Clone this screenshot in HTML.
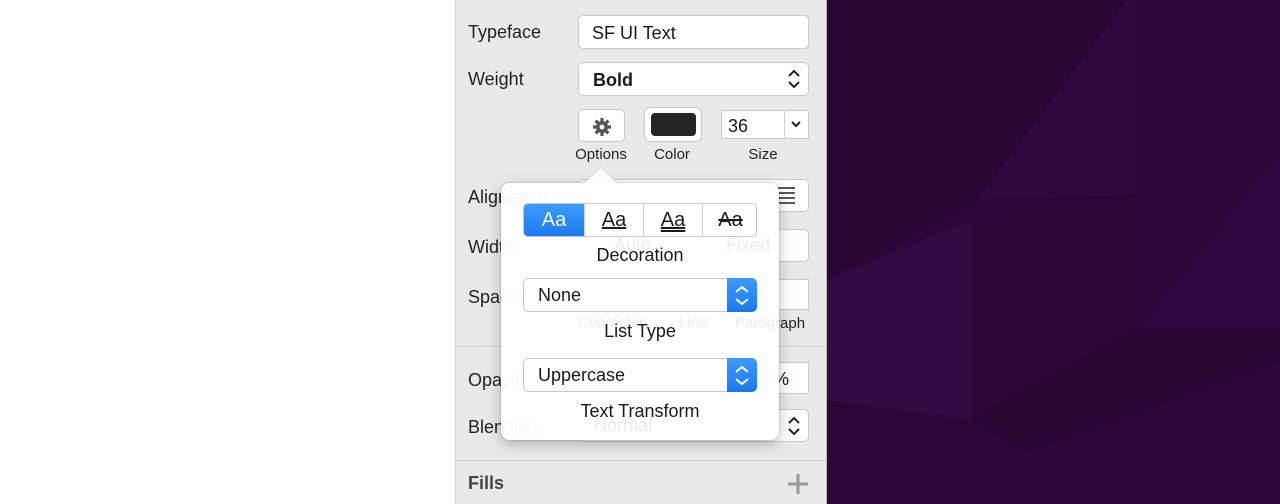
<!DOCTYPE html>
<html><head><meta charset="utf-8"><style>
*{box-sizing:border-box;margin:0;padding:0}
body{width:1280px;height:504px;overflow:hidden;background:#fff;position:relative;font-family:"Liberation Sans",sans-serif;color:#1a1a1a}
.a{position:absolute}
#panel{left:455px;top:0;width:372px;height:504px;background:#e9e9e9;border-left:1px solid #d4d4d4;border-right:1px solid #bdbdbd}
.lbl{font-size:18px;color:#222}
.box{background:#fff;border:1px solid #c9c9c9;border-radius:5px}
.small{font-size:15px;color:#222;text-align:center}
.ghost{color:#ececec}
#pop{left:501px;top:183px;width:278px;height:257px;background:rgba(255,255,255,0.97);border-radius:9px;box-shadow:0 4px 14px rgba(0,0,0,0.25),0 0 0 1px rgba(0,0,0,0.08)}
.sel{border:1px solid #c6c6c6;border-radius:5px;background:#fff;height:34px;width:234px;left:22px}
.sel .t{position:absolute;left:14px;top:6px;font-size:18px}
.sel .b{position:absolute;right:-1px;top:-1px;width:30px;height:34px;background:linear-gradient(#3e9bfc,#1a78f0);border-radius:0 5px 5px 0}
</style></head><body>
<div class="a" id="panel"></div>
<svg class="a" style="left:827px;top:0" width="453" height="504">
<rect width="453" height="504" fill="#2b0739"/>
<polygon points="0,0 300,0 150,200 0,280" fill="#270633"/>
<polygon points="150,200 300,0 310,0 310,195" fill="#2f0840"/>
<polygon points="0,280 145,220 145,420 0,400" fill="#320a44"/>
<polygon points="145,220 310,200 310,330 145,420" fill="#2a0737"/>
<polygon points="310,330 453,150 453,330" fill="#2e0840"/>
<polygon points="145,420 310,330 453,330 453,360 200,450" fill="#280634"/>
</svg>

<div class="a lbl" style="left:468px;top:22px">Typeface</div>
<div class="a box" style="left:578px;top:15px;width:231px;height:34px"><div class="a" style="left:13px;top:7px;font-size:18px">SF UI Text</div></div>
<div class="a lbl" style="left:468px;top:69px">Weight</div>
<div class="a box" style="left:578px;top:62px;width:231px;height:34px"><div class="a" style="left:14px;top:7px;font-size:18px;font-weight:bold">Bold</div>
<svg class="a" style="left:208px;top:5px" width="14" height="22"><path d="M2 8 L7 3 L12 8 M2 14 L7 19 L12 14" stroke="#222" stroke-width="2" fill="none"/></svg></div>
<div class="a box" style="left:578px;top:109px;width:47px;height:33px">
<svg class="a" style="left:12px;top:6px" width="22" height="22" viewBox="0 0 22 22"><g fill="#555"><circle cx="11" cy="11" r="6"/><g stroke="#555" stroke-width="3.2"><line x1="11" y1="2" x2="11" y2="20"/><line x1="2" y1="11" x2="20" y2="11"/><line x1="4.6" y1="4.6" x2="17.4" y2="17.4"/><line x1="17.4" y1="4.6" x2="4.6" y2="17.4"/></g></g><circle cx="11" cy="11" r="2.4" fill="#fff"/></svg></div>
<div class="a box" style="left:644px;top:107px;width:58px;height:35px;border-radius:6px"><div class="a" style="left:6px;top:5px;width:45px;height:23px;background:#252525;border-radius:4px"></div></div>
<div class="a" style="left:721px;top:110px;width:88px;height:29px;background:#fff;border:1px solid #c9c9c9"><div class="a" style="left:6px;top:5px;font-size:18px">36</div><div class="a" style="left:62px;top:0;width:1px;height:27px;background:#d0d0d0"></div>
<svg class="a" style="left:68px;top:8px" width="12" height="10"><path d="M2 3 L6 7 L10 3" stroke="#222" stroke-width="2" fill="none"/></svg></div>
<div class="a small" style="left:566px;top:146px;width:70px">Options</div>
<div class="a small" style="left:640px;top:146px;width:64px">Color</div>
<div class="a small" style="left:733px;top:146px;width:60px">Size</div>
<div class="a lbl" style="left:468px;top:187px">Alignment</div>
<div class="a box" style="left:578px;top:179px;width:231px;height:33px"></div>
<svg class="a" style="left:776px;top:186px" width="20" height="18"><path d="M1 2H19M1 7H19M1 12H19M1 17H19" stroke="#222" stroke-width="1.6"/></svg>
<div class="a lbl" style="left:468px;top:237px">Width</div>
<div class="a box" style="left:760px;top:229px;width:49px;height:33px"></div>
<div class="a lbl" style="left:468px;top:287px">Spacing</div>
<div class="a" style="left:776px;top:279px;width:33px;height:31px;background:#fff;border:1px solid #c9c9c9"></div>
<div class="a" style="left:735px;top:315px;font-size:15px;color:#222">Paragraph</div>
<div class="a" style="left:456px;top:346px;width:370px;height:1px;background:#cfcfcf"></div>
<div class="a lbl" style="left:468px;top:370px">Opacity</div>
<div class="a" style="left:760px;top:362px;width:49px;height:32px;background:#fff;border:1px solid #c9c9c9"><div class="a" style="left:12px;top:6px;font-size:18px">%</div></div>
<div class="a lbl" style="left:468px;top:417px">Blending</div>
<div class="a box" style="left:578px;top:409px;width:231px;height:33px"><svg class="a" style="left:208px;top:5px" width="14" height="22"><path d="M2 8 L7 3 L12 8 M2 14 L7 19 L12 14" stroke="#222" stroke-width="2" fill="none"/></svg></div>
<div class="a" style="left:456px;top:460px;width:370px;height:1px;background:#cfcfcf"></div>
<div class="a" style="left:468px;top:473px;font-size:18px;font-weight:bold;color:#444">Fills</div>
<svg class="a" style="left:787px;top:473px" width="22" height="22"><path d="M11 1V21M1 11H21" stroke="#999" stroke-width="3"/></svg>

<svg class="a" style="left:583px;top:166px;z-index:2" width="36" height="19"><path d="M0 18 L18 1 L35 18 Z" fill="#fdfdfd"/><path d="M0 18 L18 1 L35 18" stroke="rgba(0,0,0,0.1)" fill="none"/></svg>
<div class="a" id="pop">
<div class="a ghost" style="left:113px;top:52px;font-size:18px">Auto</div>
<div class="a ghost" style="left:225px;top:52px;font-size:18px">Fixed</div>
<div class="a ghost" style="left:77px;top:131px;font-size:15px">Character</div>
<div class="a ghost" style="left:178px;top:131px;font-size:15px">Line</div>
<div class="a ghost" style="left:234px;top:131px;font-size:15px">Paragr</div>
<div class="a ghost" style="left:93px;top:232px;font-size:18px">Normal</div>
<div class="a" style="left:22px;top:20px;width:234px;height:34px;border:1px solid #c6c6c6;border-radius:5px;background:#fff;overflow:hidden">
<div class="a" style="left:0;top:0;width:60px;height:34px;background:linear-gradient(#3e9bfc,#1a78f0);color:#fff;font-size:20px;text-align:center;line-height:32px">Aa</div>
<div class="a" style="left:60px;top:0;width:1px;height:34px;background:#d0d0d0"></div>
<div class="a" style="left:119px;top:0;width:1px;height:34px;background:#d0d0d0"></div>
<div class="a" style="left:178px;top:0;width:1px;height:34px;background:#d0d0d0"></div>
<div class="a" style="left:61px;top:0;width:58px;font-size:20px;text-align:center;line-height:32px;text-decoration:underline">Aa</div>
<div class="a" style="left:120px;top:0;width:58px;font-size:20px;text-align:center;line-height:32px;text-decoration:underline double">Aa</div>
<div class="a" style="left:179px;top:0;width:55px;font-size:20px;text-align:center;line-height:32px;text-decoration:line-through">Aa</div>
</div>
<div class="a" style="left:0;top:62px;width:278px;text-align:center;font-size:18px">Decoration</div>
<div class="a sel" style="top:95px"><div class="t">None</div><div class="b"><svg width="30" height="34"><path d="M9 14 L15 9 L21 14 M9 21 L15 26 L21 21" stroke="#fff" stroke-width="2" fill="none"/></svg></div></div>
<div class="a" style="left:0;top:138px;width:278px;text-align:center;font-size:18px">List Type</div>
<div class="a sel" style="top:175px"><div class="t">Uppercase</div><div class="b"><svg width="30" height="34"><path d="M9 14 L15 9 L21 14 M9 21 L15 26 L21 21" stroke="#fff" stroke-width="2" fill="none"/></svg></div></div>
<div class="a" style="left:0;top:218px;width:278px;text-align:center;font-size:18px">Text Transform</div>
</div>
</body></html>
